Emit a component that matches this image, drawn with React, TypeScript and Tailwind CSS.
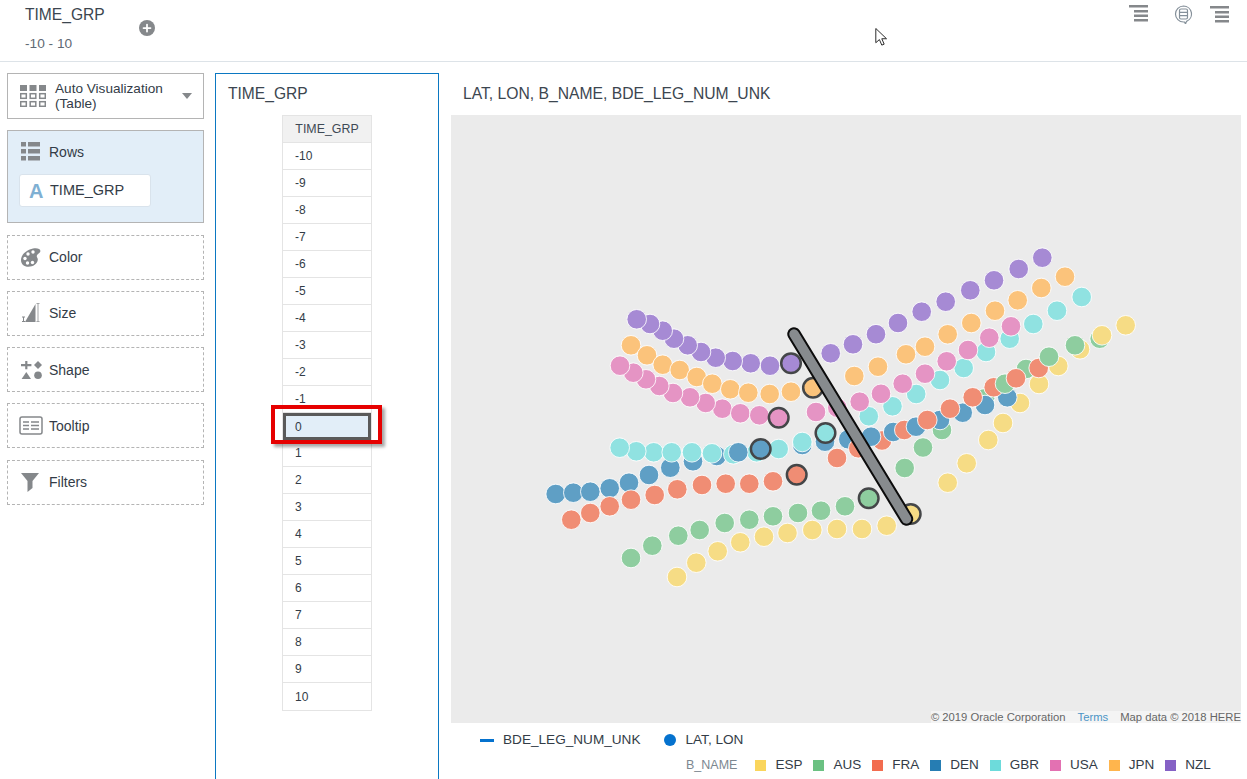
import type { ReactNode } from "react";
import { Plus } from "lucide-react";

type Dot = [number, number] | [number, number, 1];

const COLORS = {
  ESP: "#f6dc85",
  AUS: "#8ecd9f",
  FRA: "#f08d74",
  DEN: "#5f9fc5",
  GBR: "#90e2e1",
  USA: "#e594c4",
  JPN: "#fbc37b",
  NZL: "#a68ad4",
};

// third value marks the ringed point for the current time
const SERIES: { key: keyof typeof COLORS; dots: Dot[] }[] = [
  {
    key: "ESP",
    dots: [[677, 577], [696.3, 562.7], [717.7, 551.3], [740.3, 542.3], [764, 536.7], [787.5, 533], [812.3, 530], [837, 529], [862, 529], [886.7, 525.7], [910.7, 514, 1], [947.7, 482.7], [966.7, 463.3], [988.3, 440], [1003, 423], [1020, 403], [1039, 384], [1058.3, 366], [1080, 349.3]],
  },
  {
    key: "AUS",
    dots: [[631, 558], [652.3, 545.7], [678.3, 535.7], [699.7, 530], [724.7, 523], [749.3, 519.7], [773, 516.3], [798, 513], [821, 510.7], [845, 506.3], [868.7, 498.3, 1], [904.7, 468], [923, 447.5], [942, 430], [985, 398.3], [1099.7, 338.7]],
  },
  {
    key: "DEN",
    dots: [[555.7, 494], [573.3, 492.7], [590.3, 491.7], [609.7, 488.3], [629, 482.7], [649, 475], [670.3, 467.7], [693, 461.3], [716.7, 456], [802.3, 445], [825, 441.7], [848.3, 439.3], [1007.3, 397.3], [985, 405], [962.7, 412.7], [940, 420]],
  },
  {
    key: "FRA",
    dots: [[571.3, 519.7], [590.3, 513], [609.7, 506.3], [631, 499.7], [654.7, 495], [677.3, 489.3], [702, 485], [725.7, 483.7], [749.3, 483.7], [773, 481.3], [796.7, 474.7, 1], [837, 458], [858.3, 448.3], [882, 440.5]],
  },
  {
    key: "DEN",
    dots: [[871, 436.7], [893.2, 432]],
  },
  {
    key: "GBR",
    dots: [[653.7, 452.3], [636.3, 451.3], [619.7, 447.7], [671.7, 452.3], [692, 452.3], [712, 453.3], [733.3, 454.3], [756.7, 452.3], [778.7, 449], [802.3, 442], [825.5, 433, 1], [868.8, 416.3], [892.5, 406.3], [916.2, 394], [940, 380], [963.7, 368], [986, 352], [1009.7, 338.7], [1033.3, 324], [1057, 310.7], [1081.7, 297]],
  },
  {
    key: "DEN",
    dots: [[738.3, 452.3], [760.7, 449, 1]],
  },
  {
    key: "FRA",
    dots: [[904.3, 430], [950, 408.7], [972.7, 397.3], [993.7, 387.3]],
  },
  {
    key: "DEN",
    dots: [[916, 426.7]],
  },
  {
    key: "FRA",
    dots: [[927.3, 420]],
  },
  {
    key: "AUS",
    dots: [[1005, 383.7], [1026, 369]],
  },
  {
    key: "FRA",
    dots: [[1016, 378.3], [1038.7, 368]],
  },
  {
    key: "AUS",
    dots: [[1049, 356.7], [1075, 345.3]],
  },
  {
    key: "ESP",
    dots: [[1102, 335.3], [1125.7, 325.3]],
  },
  {
    key: "USA",
    dots: [[722.3, 408.7], [705.7, 403], [690, 397.3], [673, 393], [659.3, 386], [646, 379.3], [633.3, 372.7], [620, 365.7], [740.3, 413.3], [759.3, 415.3], [778.7, 417.7, 1], [816, 412], [837.3, 407.7], [859.7, 401.7], [881, 393.8], [902.7, 383.7], [925, 373.7], [946.7, 361.3], [968, 350], [989.3, 337.7], [1011, 326.3]],
  },
  {
    key: "JPN",
    dots: [[631, 345.3], [647, 355.3], [662.7, 364.7], [679.7, 370], [696.7, 377], [712.3, 383.7], [730.3, 389.3], [748.3, 392.7], [769.7, 394], [791, 391.7], [813, 387.7, 1], [854.3, 376], [878, 366.7], [906, 354.3], [925, 346.7], [947.7, 334.3], [971.3, 323], [995, 310.7], [1017.7, 300.3], [1041.3, 288], [1065, 276.7]],
  },
  {
    key: "NZL",
    dots: [[770, 365.7], [750.7, 363.3], [732.7, 361], [715.7, 357.7], [701, 352], [687.7, 345.3], [674, 338.7], [662.7, 330.7], [650, 324], [636.7, 319.3], [791, 363.3, 1], [830.7, 353.3], [853, 344.3], [876, 334.2], [898, 323], [921.7, 311.7], [945.7, 301.7], [970.3, 290.3], [994, 280.3], [1018.7, 269], [1042.3, 257.7]],
  },
];

const LEGEND = [
  ["ESP", "#fad55c"],
  ["AUS", "#6bc182"],
  ["FRA", "#f26c4f"],
  ["DEN", "#267db3"],
  ["GBR", "#6ddbdb"],
  ["USA", "#e371b2"],
  ["JPN", "#ffb54d"],
  ["NZL", "#8561c5"],
];

const ROWS = ["-10", "-9", "-8", "-7", "-6", "-5", "-4", "-3", "-2", "-1", "0", "1", "2", "3", "4", "5", "6", "7", "8", "9", "10"];

function MenuLines() {
  return (
    <svg width="19" height="17" viewBox="0 0 19 17" fill="#85888b">
      <rect x="0" y="0" width="19" height="2.500" />
      <rect x="5" y="5" width="14" height="2.500" />
      <rect x="5" y="9.500" width="14" height="2.500" />
      <rect x="5" y="14" width="14" height="2.500" />
    </svg>
  );
}

function ChatIcon() {
  return (
    <svg width="19" height="19" viewBox="0 0 19 19" fill="none" stroke="#85909a">
      <path d="M9.500 1a8 8 0 1 0 0 16h1l1 2 1-2.600A8 8 0 0 0 9.500 1z" strokeWidth="1.200" />
      <rect x="5.500" y="4" width="8" height="10" rx="1.500" strokeWidth="1.200" />
      <path d="M5.500 7.300h8M5.500 10.600h8" strokeWidth="1.200" />
    </svg>
  );
}

function VizIcon() {
  return (
    <svg width="26" height="22" viewBox="0 0 26 22" fill="#85888b">
      <rect x="0" y="0" width="7" height="6" />
      <rect x="9.500" y="0" width="7" height="6" />
      <rect x="19" y="0" width="7" height="6" />
      <g fill="none" stroke="#85888b" strokeWidth="1.500">
        <rect x="0.700" y="8.700" width="5.600" height="4.600" />
        <rect x="10.200" y="8.700" width="5.600" height="4.600" />
        <rect x="19.700" y="8.700" width="5.600" height="4.600" />
        <rect x="0.700" y="16.700" width="5.600" height="4.600" />
        <rect x="10.200" y="16.700" width="5.600" height="4.600" />
        <rect x="19.700" y="16.700" width="5.600" height="4.600" />
      </g>
    </svg>
  );
}

function RowsIcon() {
  return (
    <svg width="19" height="19" viewBox="0 0 19 19" fill="#85888b">
      <rect x="0" y="0" width="5" height="4.500" />
      <rect x="7" y="0" width="12" height="4.500" />
      <rect x="0" y="7" width="5" height="4.500" />
      <rect x="7" y="7" width="12" height="4.500" />
      <rect x="0" y="14" width="5" height="4.500" />
      <rect x="7" y="14" width="12" height="4.500" />
    </svg>
  );
}

function PaletteIcon() {
  return (
    <svg width="20" height="19" viewBox="0 0 20 19">
      <path
        fill="#85888b"
        d="M12 .6c4-1 7.600.3 7.400 2.600-.2 2-3.200 2.600-3.600 4.600-.3 1.600 1.200 2.200 1 4C16.500 16 12 18.800 7.500 18.800 3 18.800 0 16 0 12 0 6.500 6 2 12 .6z"
      />
      <g fill="#fff">
        <circle cx="12" cy="4" r="1.700" />
        <circle cx="7" cy="6" r="1.700" />
        <circle cx="4" cy="10.500" r="1.700" />
        <circle cx="6.500" cy="15" r="1.700" />
        <circle cx="11.500" cy="14.500" r="1.700" />
      </g>
    </svg>
  );
}

function SizeIcon() {
  return (
    <svg className="-mt-[2px]" width="20" height="19" viewBox="0 0 20 19" fill="#85888b">
      <path d="M4 19 14.500 1v18z" />
      <path d="M1 13.500h3v1H3v3.500h1v1H1v-1h1v-3.500H1z" />
      <path d="M15.500 0h3v1h-1v17h1v1h-3v-1h1V1h-1z" opacity=".75" />
    </svg>
  );
}

function ShapeIcon() {
  return (
    <svg width="21" height="18" viewBox="0 0 21 18" fill="#85888b">
      <path d="M4.200 0h2.200v3h4v2.200h-4v3H4.200v-3H0V3h4.200z" />
      <path d="M17 0l4 4-4 4-4-4z" />
      <path d="M5.300 11 10 18H.6z" />
      <circle cx="17" cy="14.200" r="3.800" />
    </svg>
  );
}

function TooltipIcon() {
  return (
    <svg className="-ml-[2px]" width="24" height="19" viewBox="0 0 24 19" fill="none" stroke="#85888b">
      <rect x="1" y="1" width="22" height="17" rx="2" strokeWidth="1.500" />
      <path d="M4 6h6M4 9.500h6M4 13h6M12 6h8M12 9.500h8M12 13h8" strokeWidth="1.700" />
    </svg>
  );
}

function FilterIcon() {
  return (
    <svg width="18" height="19" viewBox="0 0 18 19" fill="#85888b">
      <path d="M0 0h18l-6.500 8v7l-5 4V8z" />
    </svg>
  );
}

function Shelf({ icon, label, low }: { icon: ReactNode; label: string; low?: boolean }) {
  return (
    <div className="flex h-[45px] items-center border border-dashed border-[#b4b4b4] pl-[13px]">
      <span className="flex w-[28px] shrink-0 items-center">{icon}</span>
      <span className={low ? "pt-[2px] text-[14px] text-[#333c47]" : "text-[14px] text-[#333c47]"}>{label}</span>
    </div>
  );
}

function BubbleMap() {
  const rings: { x: number; y: number; color: string }[] = [];
  SERIES.forEach((s) =>
    s.dots.forEach((d) => {
      if (d.length === 3) rings.push({ x: d[0], y: d[1], color: COLORS[s.key] });
    }),
  );
  return (
    <svg className="block h-[608px] w-[790px]" viewBox="451 115 790 608">
      {SERIES.map((s, i) => (
        <g key={i} fill={COLORS[s.key]} stroke="#fff" strokeOpacity="0.85">
          {s.dots.map((d, j) => (d.length === 3 ? null : <circle key={j} cx={d[0]} cy={d[1]} r="9.800" />))}
        </g>
      ))}
      {rings.map((r, i) => (
        <circle key={i} cx={r.x} cy={r.y} r="9.800" fill={r.color} stroke="#444648" strokeWidth="2.500" />
      ))}
      <line x1="794" y1="334" x2="906.500" y2="519" stroke="#0c0c0c" strokeWidth="13.500" strokeLinecap="round" />
      <line x1="794" y1="334" x2="906.500" y2="519" stroke="#878b8e" strokeWidth="9.500" strokeLinecap="round" />
    </svg>
  );
}

export default function App() {
  return (
    <div className="relative h-[779px] w-[1247px] overflow-hidden bg-white font-['Liberation_Sans',Arial,sans-serif] text-[#333c47]">
      {/* Top filter bar */}
      <header className="flex h-[62px] border-b border-[#dde3e8]">
        <div className="pl-[25px] pt-[7px]">
          <div className="text-[15.600px] leading-[16px] text-[#3c4650]">TIME_GRP</div>
          <div className="mt-[14px] text-[13.700px] leading-[14px] text-[#5f6a75]">-10 - 10</div>
        </div>
        <div className="ml-[34px] mt-[20px] flex h-4 w-4 items-center justify-center rounded-full bg-[#85888b]">
          <Plus size={12} color="#fff" strokeWidth={3.500} />
        </div>
        <div className="ml-auto flex items-start pt-[5px]">
          <MenuLines />
          <span className="ml-[26px]">
            <ChatIcon />
          </span>
          <span className="ml-[17px] mr-[18px] mt-[1px]">
            <MenuLines />
          </span>
        </div>
      </header>

      <div className="flex h-[717px]">
        {/* Grammar panel */}
        <aside className="ml-[7px] w-[197px] shrink-0 pt-[11px]">
          <div className="flex h-[46px] items-center border border-[#b4b4b4] pl-[12px]">
            <VizIcon />
            <div className="ml-[9px] w-[118px] text-[13.600px] leading-[15px]">Auto Visualization (Table)</div>
            <span className="ml-[9px] h-0 w-0 border-x-[5px] border-t-[6px] border-x-transparent border-t-[#85888b]" />
          </div>
          <div className="mt-[11px] h-[93px] border border-[#b4b4b4] bg-[#e2eef8] pl-[11px] pt-[10px]">
            <div className="flex h-[20px] items-center pl-[2px]">
              <span className="flex w-[28px]">
                <RowsIcon />
              </span>
              <span className="pt-[2px] text-[14px]">Rows</span>
            </div>
            <div className="mt-[13px] flex h-[33px] w-[132px] items-center rounded-[3px] border border-[#d9e3ec] bg-white pl-[9px]">
              <span className="w-[21px] text-[20px] font-bold leading-none text-[#7fb0d3]">A</span>
              <span className="text-[14.500px]">TIME_GRP</span>
            </div>
          </div>
          <div className="mt-[12px] flex flex-col gap-[11px]">
            <Shelf icon={<PaletteIcon />} label="Color" />
            <Shelf icon={<SizeIcon />} label="Size" />
            <Shelf icon={<ShapeIcon />} label="Shape" low />
            <Shelf icon={<TooltipIcon />} label="Tooltip" low />
            <div className="mt-[1px]">
              <Shelf icon={<FilterIcon />} label="Filters" />
            </div>
          </div>
        </aside>

        {/* Table canvas */}
        <section className="ml-[11px] mt-[11px] w-[224px] shrink-0 border-x border-t border-[#0b78c2]">
          <div className="pl-[12px] pt-[10px] text-[15.600px] leading-[20px] text-[#3c4650]">TIME_GRP</div>
          <div className="ml-[66px] mt-[11px] w-[90px] border border-[#e4e4e4] text-[12px]">
            <div className="flex h-[27px] items-center justify-center border-b border-[#e4e4e4] bg-[#f1f1f1] text-[12.400px] text-[#3f4a55]">
              TIME_GRP
            </div>
            {ROWS.map((r, i) => (
              <div
                key={r}
                className={
                  r === "0"
                    ? "flex h-[27px] items-center bg-[#e2eef8] pl-[12px]"
                    : i === ROWS.length - 1
                      ? "flex h-[27px] items-center pl-[12px]"
                      : "flex h-[27px] items-center border-b border-[#e4e4e4] pl-[12px]"
                }
              >
                {r}
              </div>
            ))}
          </div>
        </section>

        {/* Map canvas */}
        <section className="ml-[12px] w-[790px] shrink-0">
          <div className="pl-[12px] pt-[21px] text-[15.700px] leading-[22px] text-[#3c4650]">LAT, LON, B_NAME, BDE_LEG_NUM_UNK</div>
          <div className="relative mt-[10px] h-[608px] bg-[#ebebeb]">
            <BubbleMap />
            <div className="absolute bottom-0 right-0 flex h-[12px] items-center bg-[#f4f4f4] text-[11.250px] leading-[12px] text-[#666]">
              <span>© 2019 Oracle Corporation</span>
              <span className="ml-[12px] text-[#4c94c6]">Terms</span>
              <span className="ml-[12px]">Map data © 2018 HERE</span>
            </div>
          </div>
          <div className="flex h-[34px] items-center pl-[29px] text-[13.600px]">
            <span className="h-[3px] w-[14px] bg-[#0572ce]" />
            <span className="ml-[9px]">BDE_LEG_NUM_UNK</span>
            <span className="ml-[23px] h-[12px] w-[12px] rounded-full bg-[#0572ce]" />
            <span className="ml-[10px]">LAT, LON</span>
          </div>
          <div className="-mt-[2px] flex items-center pl-[235px] text-[13.500px]">
            <span className="mr-[18px] text-[12.500px] text-[#7d8790]">B_NAME</span>
            {LEGEND.map(([name, color]) => (
              <span key={name} className="mr-[11px] flex items-center">
                <span className="mr-[9px] h-[11px] w-[11px]" style={{ backgroundColor: color }} />
                {name}
              </span>
            ))}
          </div>
        </section>
      </div>

      {/* Red callout over the selected row */}
      <div className="absolute left-[271px] top-[405px] h-[39px] w-[111px] border-[4px] border-[#e60000] shadow-[3px_3px_3px_rgba(0,0,0,0.35)]">
        <div className="ml-[8px] mt-[4px] h-[27px] w-[88px] border-[3px] border-[#5a5a5a]" />
      </div>

      {/* Mouse pointer captured in the screenshot */}
      <svg className="absolute left-[875px] top-[28px]" width="13" height="19" viewBox="0 0 13 20">
        <path d="M.5.500v15l3.800-3.300 2.500 5.800 2.500-1-2.500-5.700h5z" fill="#fff" stroke="#222" strokeWidth="1" />
      </svg>
    </div>
  );
}
